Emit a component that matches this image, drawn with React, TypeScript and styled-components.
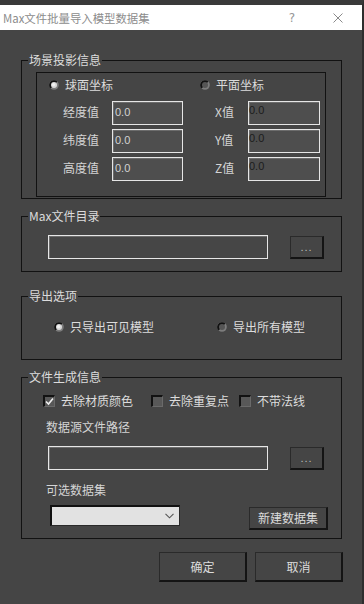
import React from 'react';
import styled, { createGlobalStyle } from 'styled-components';

const FONT = `"Noto Sans CJK SC", "Noto Sans", sans-serif`;

const Global = createGlobalStyle`
  html, body { margin: 0; padding: 0; background: #444444; }
  * { box-sizing: border-box; }
`;

const Window = styled.div`
  width: 364px;
  height: 604px;
  background: #454545;
  border-top: 5px solid #3a3a3a;
  border-right: 2px solid #2e2e2e;
  display: flex;
  flex-direction: column;
  font-family: ${FONT};
  font-size: 12px;
  color: #dcdcdc;
  overflow: hidden;
`;

const TitleBar = styled.div`
  height: 25px;
  background: #ffffff;
  display: flex;
  align-items: center;
  padding-left: 3px;
`;

const TitleText = styled.span`
  flex: 1;
  color: #8c8c8c;
  font-size: 11.4px;
  line-height: 16px;
`;

const HelpMark = styled.span`
  font-family: "DejaVu Sans", sans-serif;
  font-size: 12px;
  color: #969696;
  margin-right: 38px;
  line-height: 14px;
`;

const CloseBox = styled.span`
  display: flex;
  width: 10px;
  height: 10px;
  margin-right: 19px;
`;

const Body = styled.div`
  display: flex;
  flex-direction: column;
  padding: 22px 20px 0 21px;
`;

const Group = styled.fieldset<{ $mt: number }>`
  margin: ${(p) => p.$mt}px 0 0;
  padding: 0;
  border: 1px solid #121212;
  min-width: 0;
`;

const Legend = styled.legend`
  margin-left: 6px;
  padding: 0 1px;
  font-size: 12px;
  line-height: 16px;
  color: #dcdcdc;
`;

const SubPanel = styled.div`
  margin: 4px 15px 1px 14px;
  border: 1px solid #121212;
  padding: 4px 0 15px;
`;

const RadioRow = styled.div<{ $cols: string; $pl: number; $pt?: number; $pb?: number }>`
  display: grid;
  grid-template-columns: ${(p) => p.$cols};
  padding: ${(p) => p.$pt ?? 0}px 0 ${(p) => p.$pb ?? 0}px ${(p) => p.$pl}px;
  height: ${(p) => 16 + (p.$pt ?? 0) + (p.$pb ?? 0)}px;
  align-items: center;
`;

const Choice = styled.span`
  display: flex;
  align-items: center;
  gap: 6px;
  line-height: 16px;
  color: #dcdcdc;
  white-space: nowrap;
`;

const FieldGrid = styled.div`
  display: grid;
  grid-template-columns: 49px 71px 32px 33px 72px;
  grid-auto-rows: 24px;
  row-gap: 4px;
  padding-left: 26px;
  margin-top: 8px;
`;

const FieldLabel = styled.span`
  align-self: center;
  line-height: 16px;
  margin-top: -3px;
  color: #d4d4d4;
`;

const Spacer = styled.span``;

const ValueBox = styled.div<{ $dark?: boolean }>`
  border: 1px solid #e6e6e6;
  box-shadow: inset 1px 1px 0 #6c6c6c;
  background: #4e4e4e;
  padding: ${(p) => (p.$dark ? '1px 0 0 0' : '3px 0 0 2px')};
  font-family: "Liberation Sans", Arial, sans-serif;
  font-size: 11px;
  line-height: 14px;
  color: ${(p) => (p.$dark ? '#1c1c1c' : '#d2d2d2')};
`;

const PathRow = styled.div<{ $pt: number; $pb: number }>`
  display: flex;
  align-items: center;
  padding: ${(p) => p.$pt}px 0 ${(p) => p.$pb}px 26px;
`;

const PathBox = styled.div`
  width: 220px;
  height: 24px;
  border: 1px solid #e6e6e6;
  box-shadow: inset 1px 1px 0 #6c6c6c;
  background: #464646;
`;

const Button = styled.button<{ $w: number; $h: number }>`
  width: ${(p) => p.$w}px;
  height: ${(p) => p.$h}px;
  padding: 0;
  background: #454545;
  border: 1px solid #2a2a2a;
  border-right: 2px solid #141414;
  border-bottom: 2px solid #141414;
  color: #dcdcdc;
  font-family: ${FONT};
  font-size: 12px;
  line-height: 16px;
  display: flex;
  align-items: center;
  justify-content: center;
`;

const DotsButton = styled(Button)`
  margin-left: 22px;
  color: #bdbdbd;
  font-family: "Liberation Sans", Arial, sans-serif;
  font-size: 11px;
  letter-spacing: 1px;
`;

const CheckRow = styled.div`
  display: grid;
  grid-template-columns: 108px 88px auto;
  height: 16px;
  margin-top: 8px;
  padding-left: 21px;
  align-items: center;
`;

const CheckItem = styled.span`
  display: flex;
  align-items: center;
  gap: 6px;
  line-height: 16px;
  white-space: nowrap;
`;

const CheckBox = styled.span`
  width: 12px;
  height: 12px;
  border-top: 2px solid #121212;
  border-left: 2px solid #121212;
  border-right: 1px solid #6a6a6a;
  border-bottom: 1px solid #6a6a6a;
  background: #585858;
  display: flex;
  align-items: center;
  justify-content: center;
`;

const PlainLabel = styled.div<{ $mt: number }>`
  margin-top: ${(p) => p.$mt}px;
  padding-left: 24px;
  line-height: 16px;
  height: 16px;
  color: #d4d4d4;
`;

const SelectRow = styled.div`
  display: flex;
  align-items: flex-start;
  margin-top: 7px;
  padding: 0 0 8px 28px;
`;

const SelectBox = styled.div`
  width: 130px;
  height: 21px;
  background: #e2e2e2;
  border-top: 2px solid #111;
  border-left: 2px solid #111;
  border-right: 1px solid #2a2a2a;
  border-bottom: 1px solid #2a2a2a;
  display: flex;
  align-items: center;
  justify-content: flex-end;
  padding-right: 5px;
`;

const NewSetButton = styled(Button)`
  margin: 2px 0 0 69px;
`;

const Footer = styled.div`
  display: flex;
  justify-content: flex-end;
  gap: 8px;
  margin: 13px -1px 0 0;
`;

const Radio: React.FC<{ on?: boolean }> = ({ on }) => (
  <svg width="10" height="10" viewBox="0 0 10 10">
    <circle cx="5" cy="5" r="4.8" fill="#7c7c7c" />
    <path d="M5 0.2 A4.8 4.8 0 0 0 1.6 8.4 L5 5 Z" fill="#111" />
    <path d="M5 0.2 A4.8 4.8 0 0 1 8.4 1.6 L5 5 Z" fill="#111" />
    <circle cx="5" cy="5" r="3" fill={on ? '#d9d9d9' : '#555'} />
    {on && <circle cx="4.6" cy="4.6" r="1.6" fill="#f2f2f2" />}
  </svg>
);

const Check: React.FC<{ on?: boolean }> = ({ on }) => (
  <CheckBox>
    {on && (
      <svg width="9" height="9" viewBox="0 0 9 9">
        <path d="M1 4.5 L3.5 7 L8 1.5" stroke="#f0f0f0" strokeWidth="1.6" fill="none" />
      </svg>
    )}
  </CheckBox>
);

export default function App() {
  return (
    <>
      <Global />
      <Window>
        <TitleBar>
          <TitleText>Max文件批量导入模型数据集</TitleText>
          <HelpMark>?</HelpMark>
          <CloseBox>
            <svg width="10" height="10" viewBox="0 0 10 10">
              <path d="M0.5 0.5 L9.5 9.5 M9.5 0.5 L0.5 9.5" stroke="#8a8a8a" strokeWidth="1" />
            </svg>
          </CloseBox>
        </TitleBar>
        <Body>
          <Group $mt={0}>
            <Legend>场景投影信息</Legend>
            <SubPanel>
              <RadioRow $cols="151px auto" $pl={12}>
                <Choice><Radio on />球面坐标</Choice>
                <Choice><Radio />平面坐标</Choice>
              </RadioRow>
              <FieldGrid>
                <FieldLabel>经度值</FieldLabel>
                <ValueBox>0.0</ValueBox>
                <Spacer />
                <FieldLabel>X值</FieldLabel>
                <ValueBox $dark>0.0</ValueBox>
                <FieldLabel>纬度值</FieldLabel>
                <ValueBox>0.0</ValueBox>
                <Spacer />
                <FieldLabel>Y值</FieldLabel>
                <ValueBox $dark>0.0</ValueBox>
                <FieldLabel>高度值</FieldLabel>
                <ValueBox>0.0</ValueBox>
                <Spacer />
                <FieldLabel>Z值</FieldLabel>
                <ValueBox $dark>0.0</ValueBox>
              </FieldGrid>
            </SubPanel>
          </Group>

          <Group $mt={9}>
            <Legend>Max文件目录</Legend>
            <PathRow $pt={11} $pb={12}>
              <PathBox />
              <DotsButton $w={34} $h={23}>...</DotsButton>
            </PathRow>
          </Group>

          <Group $mt={16}>
            <Legend>导出选项</Legend>
            <RadioRow $cols="163px auto" $pl={32} $pt={15} $pb={24}>
              <Choice><Radio on />只导出可见模型</Choice>
              <Choice><Radio />导出所有模型</Choice>
            </RadioRow>
          </Group>

          <Group $mt={9}>
            <Legend>文件生成信息</Legend>
            <CheckRow>
              <CheckItem><Check on />去除材质颜色</CheckItem>
              <CheckItem><Check />去除重复点</CheckItem>
              <CheckItem><Check />不带法线</CheckItem>
            </CheckRow>
            <PlainLabel $mt={10}>数据源文件路径</PlainLabel>
            <PathRow $pt={11} $pb={0}>
              <PathBox />
              <DotsButton $w={34} $h={23}>...</DotsButton>
            </PathRow>
            <PlainLabel $mt={12}>可选数据集</PlainLabel>
            <SelectRow>
              <SelectBox>
                <svg width="9" height="6" viewBox="0 0 9 6">
                  <path d="M0.5 0.8 L4.5 4.8 L8.5 0.8" stroke="#555" strokeWidth="1.1" fill="none" />
                </svg>
              </SelectBox>
              <NewSetButton $w={79} $h={23}>新建数据集</NewSetButton>
            </SelectRow>
          </Group>

          <Footer>
            <Button $w={88} $h={30}>确定</Button>
            <Button $w={88} $h={30}>取消</Button>
          </Footer>
        </Body>
      </Window>
    </>
  );
}
